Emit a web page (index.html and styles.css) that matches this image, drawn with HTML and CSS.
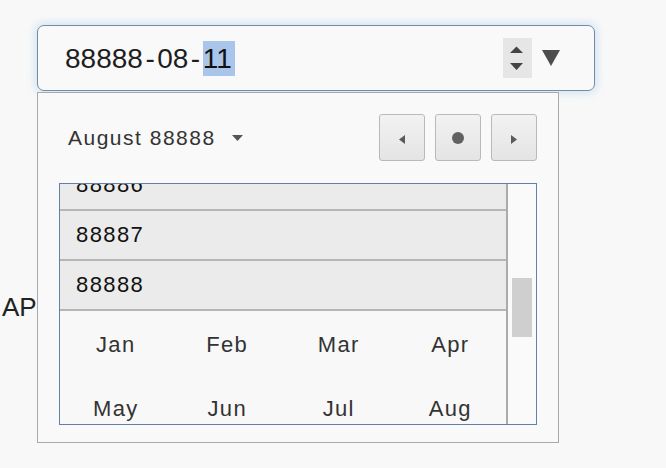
FILE: index.html
```html
<!DOCTYPE html>
<html>
<head>
<meta charset="utf-8">
<link rel="stylesheet" href="styles.css">
</head>
<body>
<div class="page">
  <div class="field">
    <div class="value"><span class="seg">88888</span><span class="sep">-</span><span class="seg">08</span><span class="sep">-</span><span class="seg sel">11</span></div>
    <div class="spin">
      <svg width="29" height="40" viewBox="0 0 29 40">
        <polygon points="7,15 20,15 13.5,8.5" fill="#444"/>
        <polygon points="7,25 20,25 13.5,32" fill="#444"/>
      </svg>
    </div>
    <svg class="drop" width="18" height="16" viewBox="0 0 18 16"><polygon points="0,0 18,0 9,16" fill="#4d4d4d"/></svg>
  </div>

  <p class="behind">AP</p>

  <div class="popup">
    <div class="head">
      <div class="title">August 88888<svg class="caret" width="11" height="6" viewBox="0 0 11 6"><polygon points="0,0 11,0 5.5,6" fill="#555"/></svg></div>
      <div class="nav">
        <button class="btn"><svg class="arrow" width="6" height="9" viewBox="0 0 6 9"><polygon points="6,0 6,9 0,4.5" fill="#5a5a5a"/></svg></button>
        <button class="btn"><span class="dot"></span></button>
        <button class="btn"><svg class="arrow" width="6" height="9" viewBox="0 0 6 9"><polygon points="0,0 0,9 6,4.5" fill="#5a5a5a"/></svg></button>
      </div>
    </div>
    <div class="list">
      <div class="scroll">
        <div class="years">
          <div class="year">88886</div>
          <div class="year">88887</div>
          <div class="year">88888</div>
        </div>
        <div class="months">
          <div class="month">Jan</div>
          <div class="month">Feb</div>
          <div class="month">Mar</div>
          <div class="month">Apr</div>
          <div class="month">May</div>
          <div class="month">Jun</div>
          <div class="month">Jul</div>
          <div class="month">Aug</div>
        </div>
      </div>
      <div class="bar"><div class="thumb"></div></div>
    </div>
  </div>
</div>
</body>
</html>
```

FILE: styles.css
```css
html, body {
  margin: 0;
  padding: 0;
  background: #f8f8f8;
  font-family: "Liberation Sans", Arial, sans-serif;
  color: #222;
}

.page {
  position: relative;
  width: 666px;
  height: 468px;
  padding-top: 25px;
  box-sizing: border-box;
  overflow: hidden;
}

.field {
  margin-left: 37px;
  width: 558px;
  height: 66px;
  box-sizing: border-box;
  border: 1px solid #6f8cab;
  border-radius: 7px;
  background: #f9f9f9;
  box-shadow: 0 0 8px 2px rgba(120, 180, 230, 0.3);
  display: flex;
  align-items: center;
  padding-left: 27px;
  padding-right: 34px;
}

.value {
  flex: 1;
  font-size: 28px;
  color: #1e1e1e;
  display: flex;
  align-items: center;
  height: 35px;
}

.seg {
  display: inline-block;
  line-height: 35px;
}

.sep {
  display: inline-block;
  line-height: 35px;
  padding: 0 2.5px;
}

.sel {
  background: #a9c5ea;
  color: #111;
  padding-right: 3px;
}

.spin {
  width: 29px;
  height: 40px;
  background: #e6e6e6;
  margin-right: 10px;
}

.spin svg {
  display: block;
}

.drop {
  display: block;
}

.behind {
  margin: 201px 0 0 2px;
  font-size: 26px;
  line-height: 30px;
  color: #222;
}

.popup {
  position: absolute;
  left: 37px;
  top: 92px;
  width: 522px;
  height: 351px;
  box-sizing: border-box;
  border: 1px solid #a9a9a9;
  background: #f9f9f9;
  padding: 21px 21px 17px 21px;
}

.head {
  display: flex;
  justify-content: space-between;
  align-items: center;
  height: 47px;
}

.title {
  padding-left: 9px;
  font-size: 21px;
  letter-spacing: 1.5px;
  color: #333;
  display: flex;
  align-items: center;
}

.caret {
  margin-left: 16px;
  display: block;
}

.nav {
  display: flex;
  gap: 10px;
}

.btn {
  width: 46px;
  height: 47px;
  box-sizing: border-box;
  border: 1px solid #b9b9b9;
  border-radius: 3px;
  background: linear-gradient(#f2f2f2, #e4e4e4);
  display: flex;
  align-items: center;
  justify-content: center;
  padding: 0;
}

.btn svg {
  display: block;
}

.arrow {
  margin-top: 4px;
}

.dot {
  width: 12px;
  height: 12px;
  border-radius: 50%;
  background: #616161;
}

.list {
  margin-top: 22px;
  height: 242px;
  box-sizing: border-box;
  border: 1px solid #6082aa;
  display: flex;
  background: #f8f8f8;
}

.scroll {
  flex: 1;
  overflow: hidden;
}

.years {
  margin-top: -23px;
}

.year {
  height: 48px;
  line-height: 48px;
  border-bottom: 2px solid #b6b6b6;
  background: #ebebeb;
  padding-left: 16px;
  font-size: 22px;
  letter-spacing: 1.4px;
  color: #111;
}

.months {
  display: grid;
  grid-template-columns: repeat(4, 1fr);
  grid-auto-rows: 64px;
  padding-top: 2px;
}

.month {
  display: flex;
  align-items: center;
  justify-content: center;
  font-size: 22px;
  letter-spacing: 1.3px;
  color: #333;
}

.bar {
  width: 30px;
  box-sizing: border-box;
  border-left: 2px solid #ababab;
  background: #fafafa;
  padding-top: 94px;
  padding-left: 4px;
}

.thumb {
  width: 20px;
  height: 59px;
  background: #cfcfcf;
}
```
